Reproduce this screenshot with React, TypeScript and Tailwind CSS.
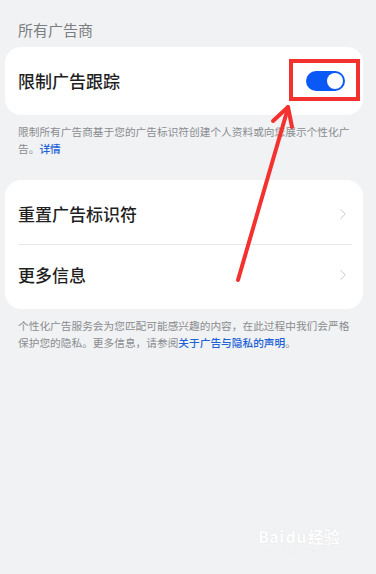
import { ChevronRight } from "lucide-react";

const font = { fontFamily: '"Noto Sans CJK SC", "Noto Sans", sans-serif' };

function Row({ label }: { label: string }) {
  return (
    <div className="flex h-[60px] items-center justify-between">
      <span className="text-[17px] font-medium text-[#1f1f1f]">{label}</span>
      <ChevronRight size={18} strokeWidth={1.3} className="mr-[-2px] text-[#c9c9cb]" />
    </div>
  );
}

export default function App() {
  return (
    <div
      style={font}
      className="relative h-[574px] w-[376px] overflow-hidden bg-[#f1f2f4] px-[5px] pt-[19px]"
    >
      <p className="px-[13px] text-[15px] leading-[22px] text-[#7b7d80]">所有广告商</p>

      <div className="mt-[6px] flex h-[68px] w-[358px] items-center justify-between rounded-[16px] bg-white pl-[13px] pr-[18px]">
        <span className="text-[17px] font-medium text-[#1f1f1f]">限制广告跟踪</span>
        <div className="flex h-[20px] w-[39px] items-center justify-end rounded-full bg-[#0a59f7] pr-[2px]">
          <div className="h-[16px] w-[16px] rounded-full bg-white" />
        </div>
      </div>

      <p className="mt-[8px] px-[13px] text-[10.7px] leading-[17px] text-[#8a8c8f]">
        限制所有广告商基于您的广告标识符创建个人资料或向您展示个性化广告。
        <span className="font-medium text-[#1e62d6]">详情</span>
      </p>

      <div className="mt-[23px] w-[358px] rounded-[16px] bg-white px-[13px] py-[4px]">
        <Row label="重置广告标识符" />
        <div className="mr-[-2px] h-px bg-[#e8e8ea]" />
        <Row label="更多信息" />
      </div>

      <p className="mt-[8px] px-[13px] text-[10.7px] leading-[17px] text-[#8a8c8f]">
        个性化广告服务会为您匹配可能感兴趣的内容，在此过程中我们会严格保护您的隐私。更多信息，请参阅
        <span className="font-medium text-[#1e62d6]">关于广告与隐私的声明</span>。
      </p>

      {/* annotation: red box + arrow */}
      <div className="absolute left-[289px] top-[59px] h-[42px] w-[71px] border-[4px] border-[#f3322f]" />
      <svg className="absolute left-0 top-0" width="376" height="574" viewBox="0 0 376 574">
        <g stroke="#f3322f" strokeWidth="4" strokeLinecap="round" fill="none">
          <line x1="238" y1="280" x2="288" y2="108" />
          <line x1="288" y1="107" x2="273" y2="121" />
          <line x1="288" y1="107" x2="292" y2="127" />
        </g>
      </svg>

      {/* watermark */}
      <div className="absolute left-[258px] top-[527px] flex flex-col items-center text-white">
        <span className="text-[16px] font-bold leading-[18px] tracking-wide [text-shadow:0_0_1px_#d4d5d8]">
          Bai<span className="mx-[1px]">du</span>经验
        </span>
        <span
          className="text-[9px] leading-[12px] [text-shadow:0_0_1px_#d4d5d8]"
          style={{ fontFamily: '"Liberation Serif", serif' }}
        >
          jingyan.baidu.com
        </span>
      </div>
    </div>
  );
}
